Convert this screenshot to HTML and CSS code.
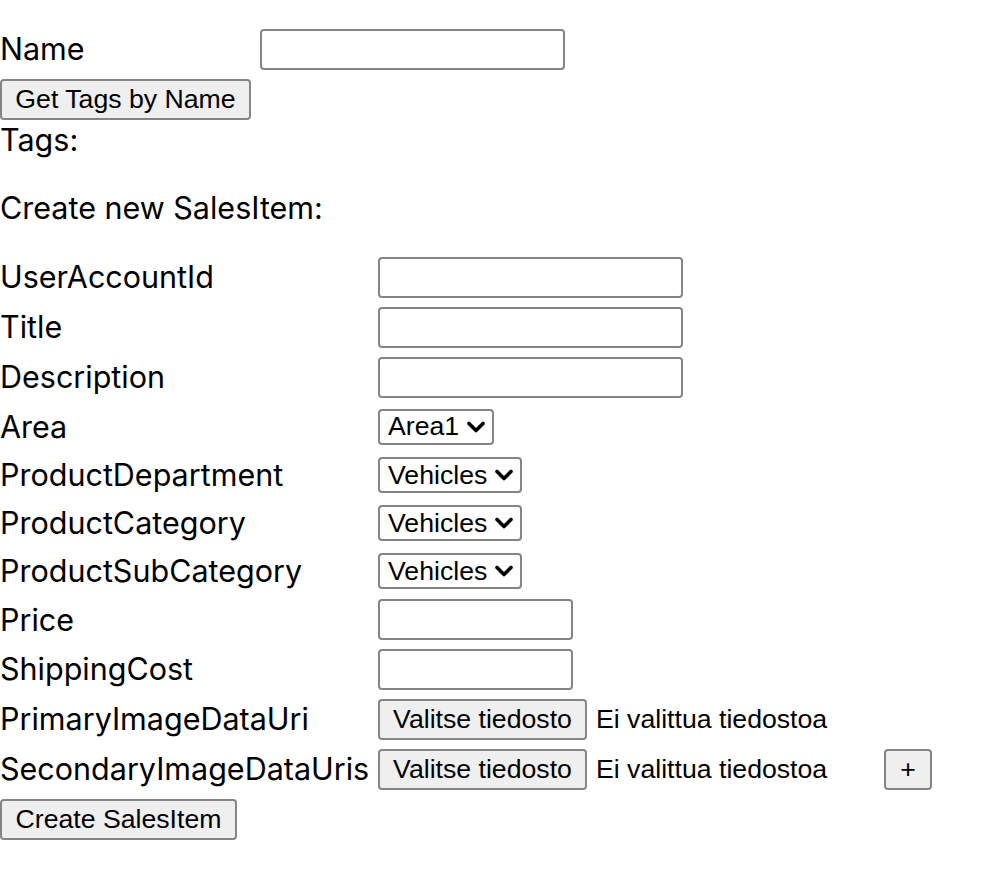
FILE: index.html
```html
<!DOCTYPE html>
<html lang="fi">
<head>
<meta charset="utf-8">
<title>SalesItem</title>
<link rel="stylesheet" href="styles.css">
</head>
<body>
<div class="page">
  <div class="row r50">
    <label class="lbl lbl-name">Name</label>
    <input class="txt" type="text">
  </div>
  <div class="row r50">
    <button class="btn btn-tags" type="button">Get Tags by Name</button>
  </div>
  <div class="line">Tags:</div>
  <div class="line create-title">Create new SalesItem:</div>

  <div class="row r50"><label class="lbl">UserAccountId</label><input class="txt" type="text"></div>
  <div class="row r50"><label class="lbl">Title</label><input class="txt" type="text"></div>
  <div class="row r50"><label class="lbl">Description</label><input class="txt" type="text"></div>
  <div class="row r49"><label class="lbl">Area</label>
    <div class="sel"><span>Area1</span><svg class="chev" viewBox="0 0 20 12" width="20" height="12"><path d="M3 2.5 L10 9.5 L17 2.5" /></svg></div>
  </div>
  <div class="row r48"><label class="lbl">ProductDepartment</label>
    <div class="sel"><span>Vehicles</span><svg class="chev" viewBox="0 0 20 12" width="20" height="12"><path d="M3 2.5 L10 9.5 L17 2.5" /></svg></div>
  </div>
  <div class="row r48"><label class="lbl">ProductCategory</label>
    <div class="sel"><span>Vehicles</span><svg class="chev" viewBox="0 0 20 12" width="20" height="12"><path d="M3 2.5 L10 9.5 L17 2.5" /></svg></div>
  </div>
  <div class="row r48"><label class="lbl">ProductSubCategory</label>
    <div class="sel"><span>Vehicles</span><svg class="chev" viewBox="0 0 20 12" width="20" height="12"><path d="M3 2.5 L10 9.5 L17 2.5" /></svg></div>
  </div>
  <div class="row r49"><label class="lbl">Price</label><input class="txt txt-short" type="text"></div>
  <div class="row r50"><label class="lbl">ShippingCost</label><input class="txt txt-short" type="text"></div>
  <div class="row r50"><label class="lbl">PrimaryImageDataUri</label>
    <div class="file"><button class="btn btn-file" type="button">Valitse tiedosto</button><span class="file-text">Ei valittua tiedostoa</span></div>
  </div>
  <div class="row r50"><label class="lbl">SecondaryImageDataUris</label>
    <div class="file"><button class="btn btn-file" type="button">Valitse tiedosto</button><span class="file-text">Ei valittua tiedostoa</span></div>
    <button class="btn btn-plus" type="button">+</button>
  </div>
  <div class="row r50">
    <button class="btn btn-create" type="button">Create SalesItem</button>
  </div>
</div>
</body>
</html>
```

FILE: styles.css
```css
html, body {
  margin: 0;
  padding: 0;
  background: #ffffff;
}

body {
  color: #000000;
  font-family: Inter, "Noto Sans", sans-serif;
  font-size: 30.5px;
}

.page {
  padding-top: 24px;
}

.row {
  display: flex;
  align-items: center;
}

.r50 { height: 50px; }
.r49 { height: 49px; }
.r48 { height: 48px; }

.lbl {
  flex: none;
  width: 378px;
  line-height: 36px;
  white-space: nowrap;
}

.lbl-name {
  width: 260px;
}

.line {
  line-height: 32px;
}

.create-title {
  margin-top: 36px;
  margin-bottom: 28px;
}

.txt {
  box-sizing: border-box;
  width: 305px;
  height: 41px;
  margin: 0;
  padding: 0 4px;
  border: 2px solid #858585;
  border-radius: 4px;
  background: #ffffff;
  outline: none;
}

.txt-short {
  width: 195px;
}

.btn {
  box-sizing: border-box;
  height: 41px;
  margin: 0;
  padding: 0;
  border: 2px solid #858585;
  border-radius: 4px;
  background: #efefef;
  color: #000000;
  font-family: "Liberation Sans", Arial, sans-serif;
  font-size: 26.67px;
  line-height: 37px;
  text-align: center;
  white-space: nowrap;
}

.btn-tags { width: 251px; }
.btn-file { width: 209px; }
.btn-create { width: 237px; }
.btn-plus { width: 48px; }

.sel {
  box-sizing: border-box;
  height: 36px;
  display: flex;
  align-items: center;
  padding: 0 6px 0 8px;
  border: 2px solid #858585;
  border-radius: 4px;
  background: #ffffff;
  font-family: "Liberation Sans", Arial, sans-serif;
  font-size: 26.67px;
}

.chev {
  margin-left: 7px;
  display: block;
}

.chev path {
  fill: none;
  stroke: #000000;
  stroke-width: 3.6;
  stroke-linecap: round;
  stroke-linejoin: round;
}

.file {
  flex: none;
  width: 506px;
  display: flex;
  align-items: center;
}

.file-text {
  margin-left: 9px;
  font-family: "Liberation Sans", Arial, sans-serif;
  font-size: 26.67px;
  white-space: nowrap;
}
```
